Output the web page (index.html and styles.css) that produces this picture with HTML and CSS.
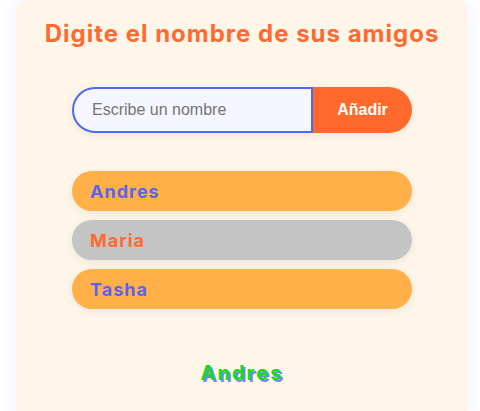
FILE: index.html
```html
<!DOCTYPE html>
<html lang="es">
<head>
<meta charset="utf-8">
<link rel="stylesheet" href="styles.css">
</head>
<body>
<main class="card">
  <h1 class="title">Digite el nombre de sus amigos</h1>
  <form class="add-form">
    <input class="name-input" type="text" placeholder="Escribe un nombre">
    <button class="add-btn" type="button">Añadir</button>
  </form>
  <ul class="friends">
    <li class="friend friend-odd">Andres</li>
    <li class="friend friend-even">Maria</li>
    <li class="friend friend-odd">Tasha</li>
  </ul>
  <p class="selected">Andres</p>
</main>
</body>
</html>
```
FILE: styles.css
```css
html, body {
  margin: 0;
  padding: 0;
  background: #ffffff;
  height: 411px;
  overflow: hidden;
}
.card {
  box-sizing: border-box;
  width: 452px;
  height: 430px;
  margin: 0 0 0 16px;
  background: #fff6ea;
  border-radius: 10px;
  box-shadow: 0 0 16px rgba(110, 120, 255, 0.12);
  display: flex;
  flex-direction: column;
  align-items: center;
  font-family: Inter, "Noto Sans", sans-serif;
}
.title {
  margin: 19px 0 0;
  font-size: 24px;
  font-weight: 700;
  letter-spacing: 1px;
  color: #ff6a30;
  line-height: 30px;
}
.add-form {
  display: flex;
  margin: 38px 0 0;
  width: 340px;
  height: 46px;
  border-radius: 23px;
  box-shadow: 0 2px 8px rgba(0, 0, 0, 0.08);
}
.name-input {
  box-sizing: border-box;
  width: 241px;
  height: 46px;
  border: 2px solid #4f6bed;
  border-radius: 23px 0 0 23px;
  background: #f5f6ff;
  padding: 0 0 0 18px;
  font-family: "Liberation Sans", Arial, sans-serif;
  font-size: 16px;
  color: #333;
  outline: none;
}
.name-input::placeholder {
  color: #757575;
}
.add-btn {
  flex: 1;
  height: 46px;
  border: none;
  border-radius: 0 23px 23px 0;
  background: #ff6a2c;
  color: #ffffff;
  font-family: "Liberation Sans", Arial, sans-serif;
  font-size: 16px;
  font-weight: 700;
  padding: 0 0 0 0;
}
.friends {
  list-style: none;
  margin: 38px 0 0;
  padding: 0;
  width: 340px;
  display: flex;
  flex-direction: column;
  gap: 9px;
}
.friend {
  height: 40px;
  border-radius: 20px;
  padding: 0 0 0 18px;
  display: flex;
  align-items: center;
  font-size: 18px;
  font-weight: 700;
  letter-spacing: 1px;
  box-shadow: 0 2px 8px rgba(0, 0, 0, 0.08);
}
.friend-odd {
  background: #ffb048;
  color: #5b63f0;
}
.friend-even {
  background: #c4c4c4;
  color: #ff6a30;
}
.selected {
  margin: 52px 0 0 0;
  font-size: 20px;
  font-weight: 700;
  letter-spacing: 2px;
  color: #11dd11;
  text-shadow: 2px 2px 0 #7b82ff;
}
```
